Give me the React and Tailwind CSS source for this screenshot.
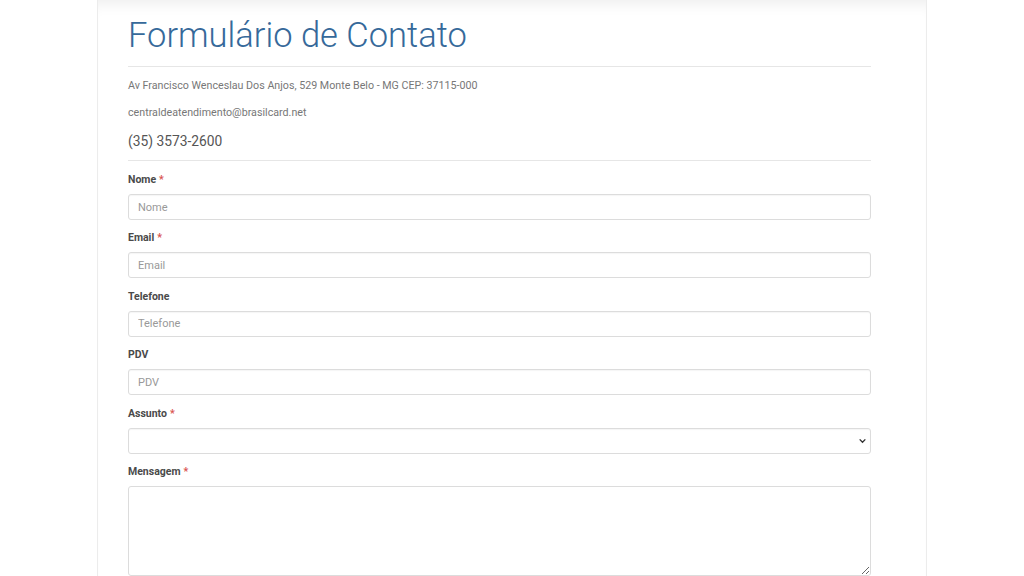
import React from 'react';

const fields = [
  { id: 'nome', label: 'Nome', required: true, placeholder: 'Nome' },
  { id: 'email', label: 'Email', required: true, placeholder: 'Email' },
  { id: 'telefone', label: 'Telefone', required: false, placeholder: 'Telefone' },
  { id: 'pdv', label: 'PDV', required: false, placeholder: 'PDV' },
];

const Label = ({ htmlFor, children, required }) => (
  <label htmlFor={htmlFor} className="block h-[14px] text-[10.5px] leading-[14px] font-bold text-[#4a4a4a]">
    {children}
    {required && <span className="ml-[3px] text-[#d9534f]">*</span>}
  </label>
);

const inputClass =
  'mt-[7px] block w-full h-[26px] rounded-[3px] border border-[#dcdcdc] bg-white px-[9px] text-[11px] text-[#555] placeholder:text-[#999] shadow-[inset_0_1px_1px_rgba(0,0,0,0.04)] outline-none';

export default function App() {
  return (
    <div className="min-h-screen bg-white font-['Roboto','Liberation_Sans',sans-serif]">
      <div className="ml-[97px] w-[830px] min-h-[576px] border-x border-[#ececec] bg-white pl-[30px] pt-[15px] shadow-[inset_0_14px_14px_-10px_rgba(0,0,0,0.07)]">
        <div className="w-[743px]">
          {/* Header */}
          <h1 className="h-[40px] text-[34.5px] leading-[40px] font-light text-[#36699a]">
            Formulário de Contato
          </h1>
          <hr className="mt-[11px] border-0 border-t border-[#e6e6e6]" />

          <p className="mt-[11px] text-[10.7px] leading-[16px] text-[#777]">
            Av Francisco Wenceslau Dos Anjos, 529 Monte Belo - MG CEP: 37115-000
          </p>
          <p className="mt-[11px] text-[10.7px] leading-[16px] text-[#777]">
            centraldeatendimento@brasilcard.net
          </p>
          <p className="mt-[10px] text-[13.8px] leading-[20px] text-[#555]">(35) 3573-2600</p>
          <hr className="mt-[9px] border-0 border-t border-[#e6e6e6]" />

          {/* Form */}
          <form className="mt-[12px] flex flex-col gap-[11.4px]">
            {fields.map((f) => (
              <div key={f.id}>
                <Label htmlFor={f.id} required={f.required}>
                  {f.label}
                </Label>
                <input id={f.id} type="text" placeholder={f.placeholder} className={inputClass} />
              </div>
            ))}

            <div>
              <Label htmlFor="assunto" required>
                Assunto
              </Label>
              <div className="relative">
                <select id="assunto" className={inputClass + ' appearance-none'}>
                  <option></option>
                </select>
                <svg
                  className="pointer-events-none absolute right-[4px] top-[8px]"
                  width="9"
                  height="9"
                  viewBox="0 0 16 16"
                  fill="none"
                  stroke="#333"
                  strokeWidth="2.5"
                >
                  <path d="M3 6l5 5 5-5" />
                </svg>
              </div>
            </div>

            <div>
              <Label htmlFor="mensagem" required>
                Mensagem
              </Label>
              <textarea
                id="mensagem"
                className="mt-[7px] block w-full h-[90px] rounded-[3px] border border-[#dcdcdc] bg-white px-[9px] py-[6px] text-[11px] text-[#555] outline-none"
              />
            </div>
          </form>
        </div>
      </div>
    </div>
  );
}
